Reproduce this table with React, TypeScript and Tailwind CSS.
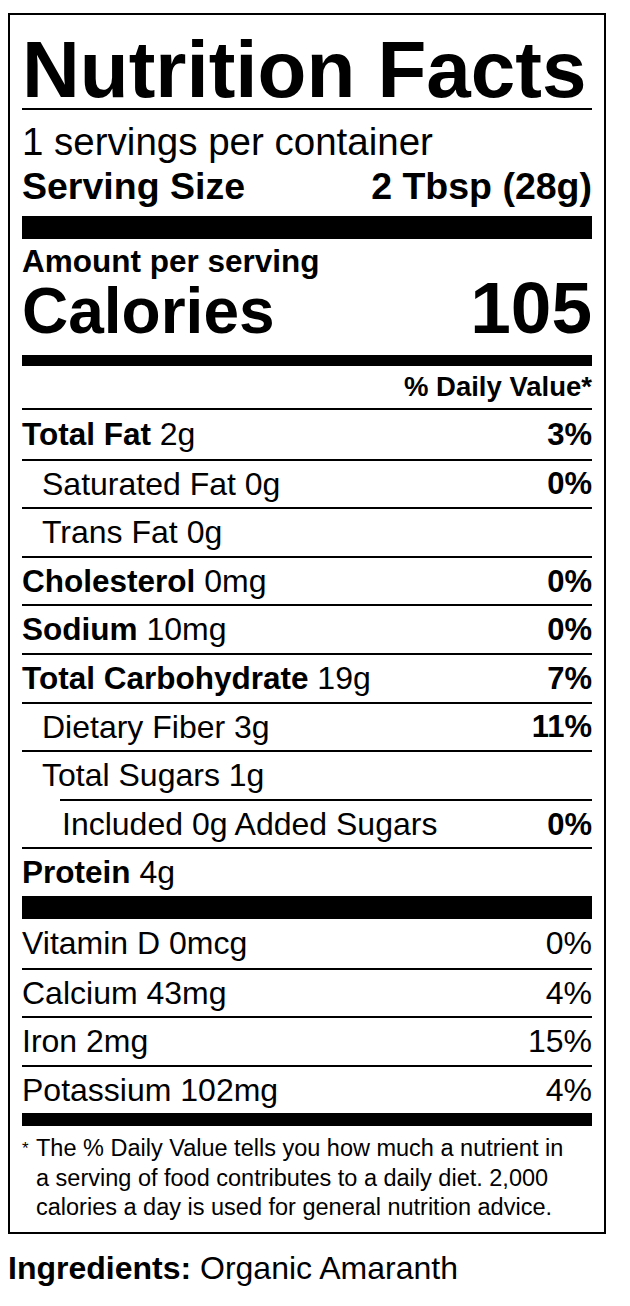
const font = { fontFamily: '"Liberation Sans", Arial, Helvetica, sans-serif' };

type Row = {
  label: string;
  amount?: string;
  dv?: string;
  bold?: boolean;
  indent?: 0 | 1 | 2;
  lineIndent?: boolean;
};

const macros: Row[] = [
  { label: "Total Fat", amount: "2g", dv: "3%", bold: true },
  { label: "Saturated Fat", amount: "0g", dv: "0%", indent: 1 },
  { label: "Trans Fat", amount: "0g", indent: 1 },
  { label: "Cholesterol", amount: "0mg", dv: "0%", bold: true },
  { label: "Sodium", amount: "10mg", dv: "0%", bold: true },
  { label: "Total Carbohydrate", amount: "19g", dv: "7%", bold: true },
  { label: "Dietary Fiber", amount: "3g", dv: "11%", indent: 1 },
  { label: "Total Sugars", amount: "1g", indent: 1 },
  { label: "Included 0g Added Sugars", dv: "0%", indent: 2, lineIndent: true },
  { label: "Protein", amount: "4g", bold: true },
];

const vitamins = [
  { label: "Vitamin D 0mcg", dv: "0%" },
  { label: "Calcium 43mg", dv: "4%" },
  { label: "Iron 2mg", dv: "15%" },
  { label: "Potassium 102mg", dv: "4%" },
];

function MacroRow({ row, first }: { row: Row; first?: boolean }) {
  const pad = row.indent === 2 ? "pl-[40px]" : row.indent === 1 ? "pl-[20px]" : "";
  return (
    <div className={row.lineIndent ? "pl-[38px]" : ""}>
      <div
        className={`flex items-center justify-between h-[48.6px] ${first ? "" : "border-t-2 border-black"} ${row.lineIndent ? "pl-[2px]" : pad}`}
      >
        <span className="text-[32px] leading-none">
          {row.bold ? <b className="text-[31.5px] font-bold">{row.label}</b> : row.label}
          {row.amount ? ` ${row.amount}` : ""}
        </span>
        {row.dv && <b className="text-[31px] font-bold leading-none">{row.dv}</b>}
      </div>
    </div>
  );
}

export default function App() {
  return (
    <div className="bg-white text-black min-h-[1306px] w-[630px] pl-[8px] pt-[13px]" style={font}>
      <div className="w-[598px] border-2 border-black px-3">
        <h1 className="text-[80px] font-bold leading-[76px] pt-[17px] border-b-2 border-black">
          Nutrition Facts
        </h1>
        <p className="text-[38.5px] leading-[44px] pt-[10px]">1 servings per container</p>
        <div className="flex justify-between text-[37.5px] font-bold leading-[44px]">
          <span>Serving Size</span>
          <span>2 Tbsp (28g)</span>
        </div>
        <div className="h-[23px] bg-black mt-[8px]" />

        <p className="text-[31.5px] font-bold leading-[36px] pt-[4px]">Amount per serving</p>
        <div className="flex justify-between items-baseline font-bold">
          <span className="text-[64px] leading-[64px]">Calories</span>
          <span className="text-[73px] leading-[58px]">105</span>
        </div>
        <div className="h-[11px] bg-black mt-[12px]" />

        <p className="text-right text-[27.5px] font-bold leading-[32px] pt-[5px] pb-[5px] border-b-2 border-black">
          % Daily Value*
        </p>

        {macros.map((r, i) => (
          <MacroRow key={r.label} row={r} first={i === 0} />
        ))}
        <div className="h-[23px] bg-black" />

        {vitamins.map((v, i) => (
          <div
            key={v.label}
            className={`flex items-center justify-between text-[32px] leading-none h-[48.6px] ${i === 0 ? "" : "border-t-2 border-black"}`}
          >
            <span>{v.label}</span>
            <span>{v.dv}</span>
          </div>
        ))}
        <div className="h-[13px] bg-black" />

        <div className="flex text-[23.5px] leading-[29.5px] pt-[8px] pb-[9px]">
          <span className="text-[17px] leading-[29.5px] w-[14px] shrink-0">*</span>
          <p className="pr-[14px]">
            The % Daily Value tells you how much a nutrient in a serving of food contributes to a
            daily diet. 2,000 calories a day is used for general nutrition advice.
          </p>
        </div>
      </div>

      <p className="text-[32px] leading-[38px] mt-[15px]">
        <b className="font-bold">Ingredients:</b> Organic Amaranth
      </p>
    </div>
  );
}
